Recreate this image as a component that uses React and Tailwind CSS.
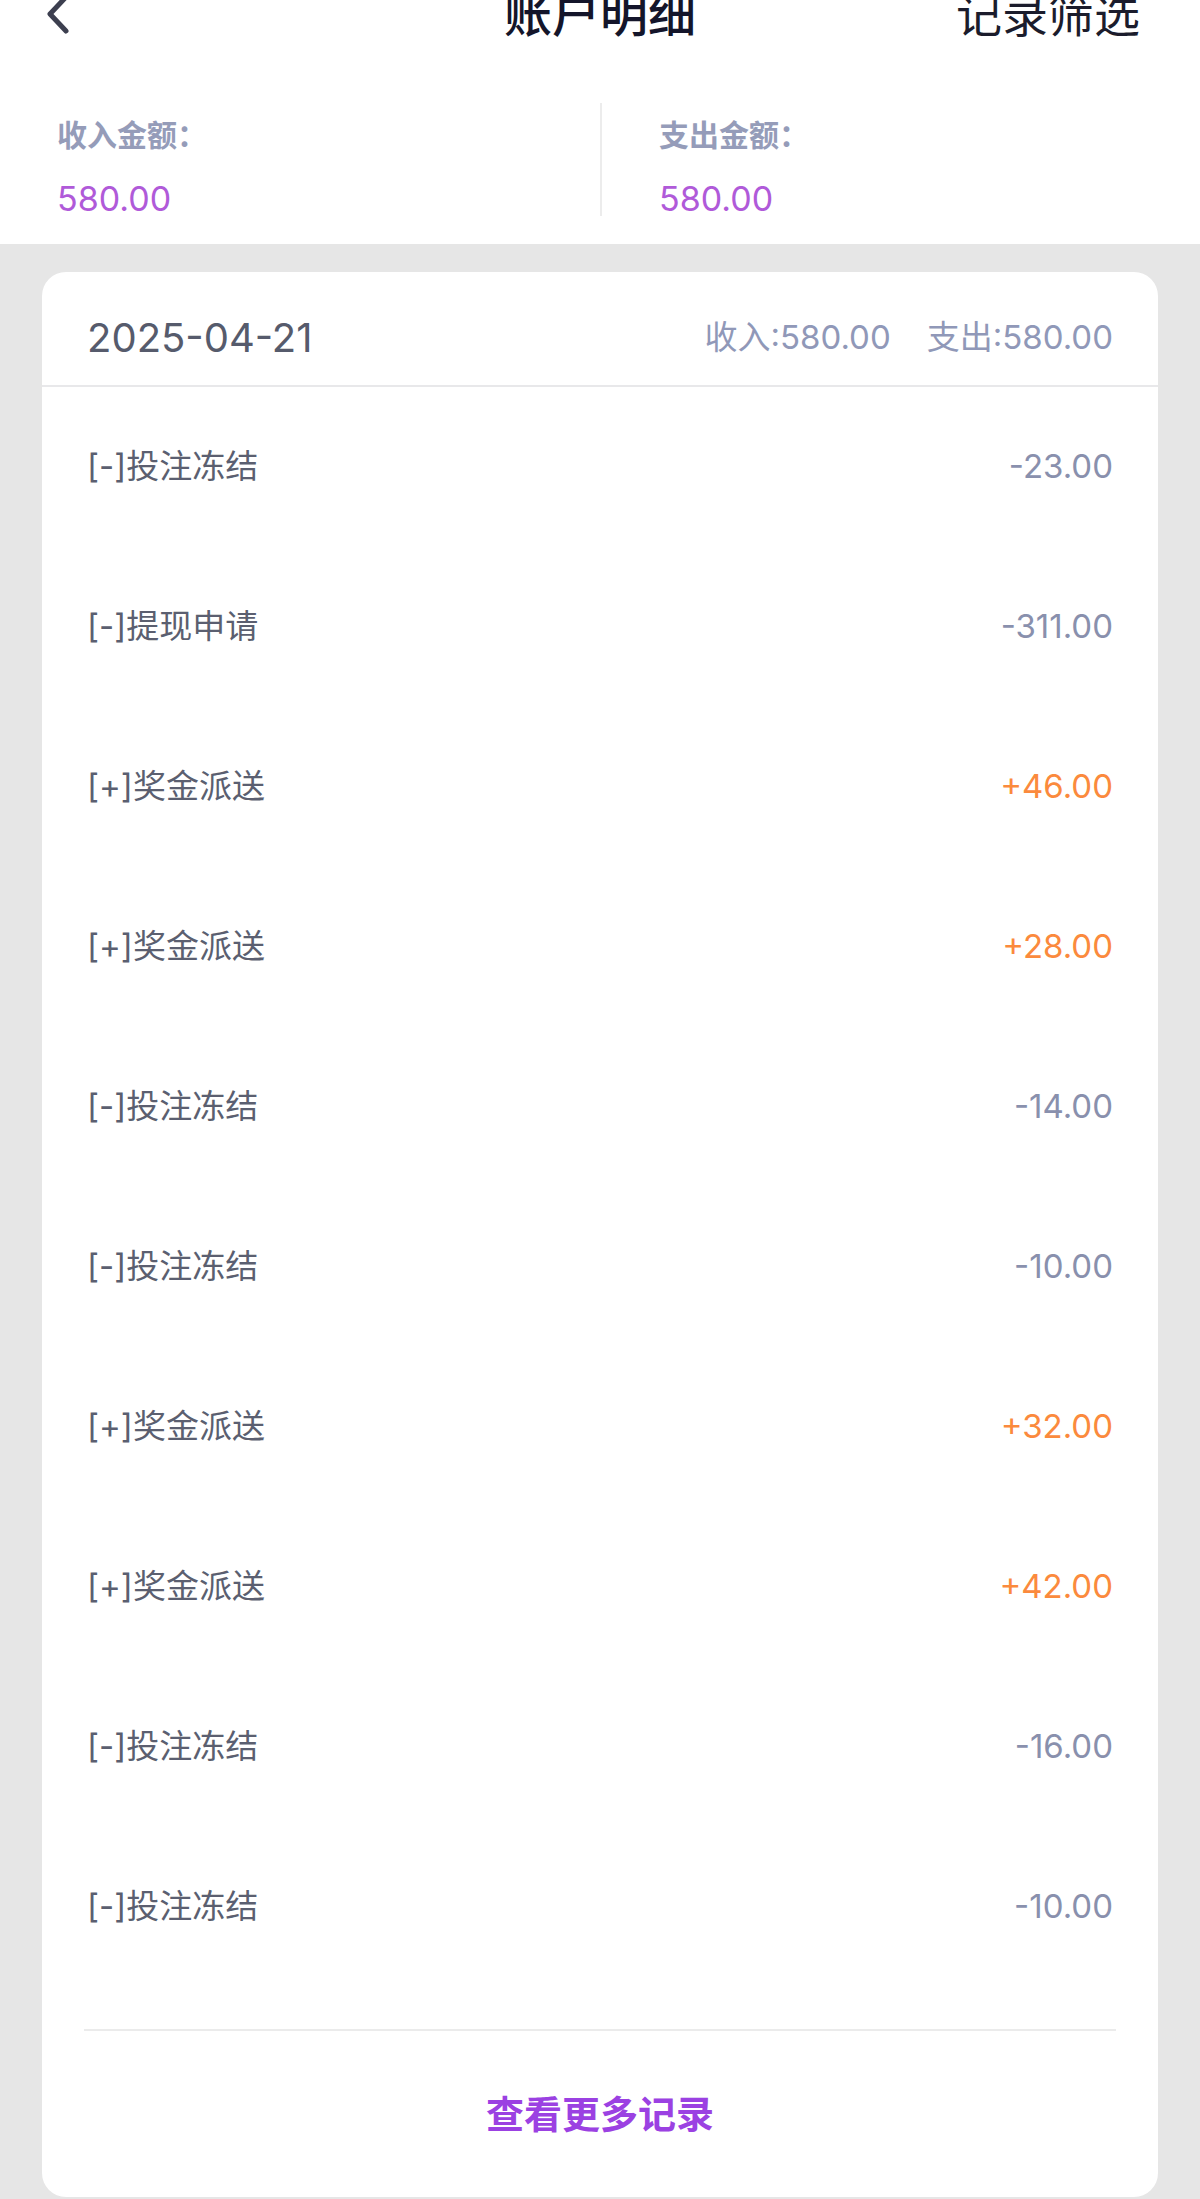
import React from 'react';

const records = [
  { label: '[-]投注冻结', amount: '-23.00', income: false },
  { label: '[-]提现申请', amount: '-311.00', income: false },
  { label: '[+]奖金派送', amount: '+46.00', income: true },
  { label: '[+]奖金派送', amount: '+28.00', income: true },
  { label: '[-]投注冻结', amount: '-14.00', income: false },
  { label: '[-]投注冻结', amount: '-10.00', income: false },
  { label: '[+]奖金派送', amount: '+32.00', income: true },
  { label: '[+]奖金派送', amount: '+42.00', income: true },
  { label: '[-]投注冻结', amount: '-16.00', income: false },
  { label: '[-]投注冻结', amount: '-10.00', income: false },
];

const font = "font-['Inter','Noto_Sans_CJK_SC',sans-serif]";

const BackIcon = () => (
  <svg width="30" height="44" viewBox="0 0 30 44" fill="none">
    <path d="M22 4 L6 21 L22 38" stroke="#3c3f4f" strokeWidth="5" strokeLinecap="round" strokeLinejoin="round" />
  </svg>
);

const App = () => {
  return (
    <div className={`${font} min-h-screen overflow-hidden bg-[#e6e6e6]`}>
      <div className="bg-white">
        {/* nav bar, scrolled partly out of view */}
        <div className="-mt-[33px] h-[96px] flex items-center justify-between pl-[44px] pr-[60px] relative">
          <BackIcon />
          <h1 className="absolute left-1/2 -translate-x-1/2 text-[48px] font-medium text-[#14152a] leading-none">
            账户明细
          </h1>
          <span className="text-[46px] text-[#1b1c2c] leading-none">记录筛选</span>
        </div>

        {/* totals */}
        <div className="grid grid-cols-2 pt-[40px] pb-[28px]">
          <div className="h-[113px] pl-[57px] pt-[12px]">
            <p className="text-[30px] leading-[40px] font-bold text-[#959cb9]">收入金额：</p>
            <p className="mt-[26px] text-[34px] leading-[36px] text-[#b05ad9]">580.00</p>
          </div>
          <div className="h-[113px] pl-[57px] pt-[12px] border-l-2 border-[#ececec]">
            <p className="text-[30px] leading-[40px] font-bold text-[#959cb9]">支出金额：</p>
            <p className="mt-[26px] text-[34px] leading-[36px] text-[#b05ad9]">580.00</p>
          </div>
        </div>
      </div>

      <div className="mx-[42px] mt-[28px] mb-[2px] bg-white rounded-[24px]">
        <div className="h-[115px] pt-[18px] px-[45px] flex items-center justify-between border-b-2 border-[#e8e8ea]">
          <span className="text-[40px] text-[#565b6c]">2025-04-21</span>
          <div className="flex items-center gap-[36px] text-[33px] text-[#9098b8]">
            <span>收入:580.00</span>
            <span>支出:580.00</span>
          </div>
        </div>

        <ul>
          {records.map((r, i) => (
            <li key={i} className="h-[160px] px-[45px] flex items-center justify-between">
              <span className="text-[33px] text-[#5b5f70]">{r.label}</span>
              <span className={r.income ? 'text-[33px] text-[#fb8a3d]' : 'text-[33px] text-[#8990ad]'}>
                {r.amount}
              </span>
            </li>
          ))}
        </ul>

        <div className="mx-[42px] mt-[42px] border-t-2 border-[#ebebeb]" />
        <div className="h-[166px] flex items-center justify-center">
          <button className="text-[38px] font-bold text-[#9b41e2]">查看更多记录</button>
        </div>
      </div>
    </div>
  );
};

export default App;
